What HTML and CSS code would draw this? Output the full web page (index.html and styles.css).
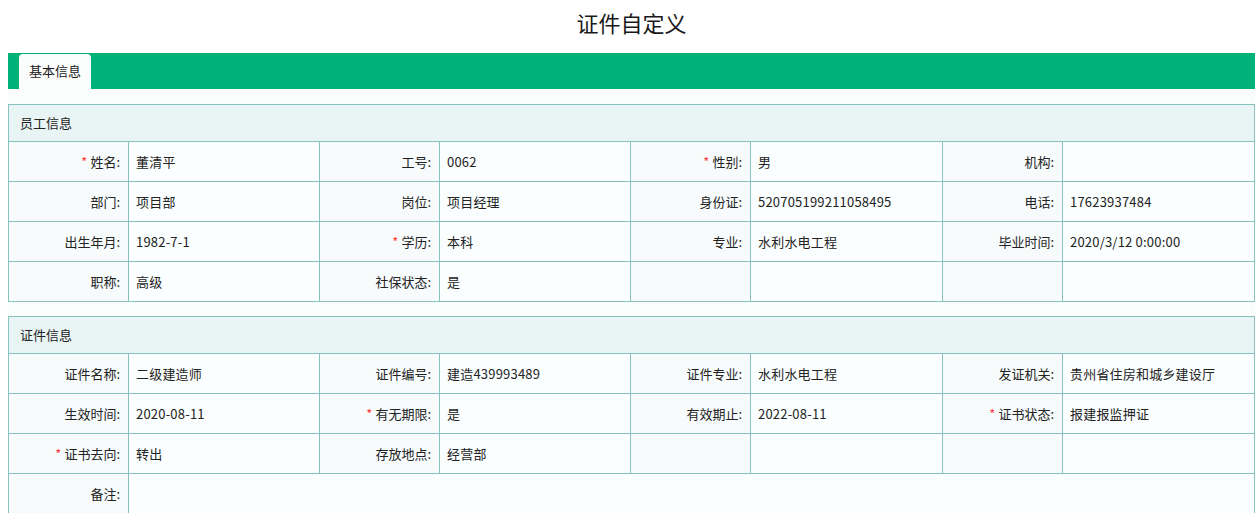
FILE: index.html
```html
<!DOCTYPE html>
<html lang="zh-CN">
<head>
<meta charset="utf-8">
<title>证件自定义</title>
<link rel="stylesheet" href="styles.css">
</head>
<body>
<div class="page">
  <h1 class="title">证件自定义</h1>
  <div class="tabbar">
    <div class="tab">基本信息</div>
  </div>
  <div class="content">
    <table class="info">
      <colgroup>
        <col class="cl"><col class="cv"><col class="cl"><col class="cv"><col class="cl"><col class="cv2"><col class="cl"><col class="cv2">
      </colgroup>
      <tr class="head"><td colspan="8">员工信息</td></tr>
      <tr>
        <td class="lbl"><span class="req">*</span>姓名:</td><td class="val">董清平</td>
        <td class="lbl">工号:</td><td class="val">0062</td>
        <td class="lbl"><span class="req">*</span>性别:</td><td class="val">男</td>
        <td class="lbl">机构:</td><td class="val"></td>
      </tr>
      <tr>
        <td class="lbl">部门:</td><td class="val">项目部</td>
        <td class="lbl">岗位:</td><td class="val">项目经理</td>
        <td class="lbl">身份证:</td><td class="val">520705199211058495</td>
        <td class="lbl">电话:</td><td class="val">17623937484</td>
      </tr>
      <tr>
        <td class="lbl">出生年月:</td><td class="val">1982-7-1</td>
        <td class="lbl"><span class="req">*</span>学历:</td><td class="val">本科</td>
        <td class="lbl">专业:</td><td class="val">水利水电工程</td>
        <td class="lbl">毕业时间:</td><td class="val">2020/3/12 0:00:00</td>
      </tr>
      <tr>
        <td class="lbl">职称:</td><td class="val">高级</td>
        <td class="lbl">社保状态:</td><td class="val">是</td>
        <td class="lbl"></td><td class="val"></td>
        <td class="lbl"></td><td class="val"></td>
      </tr>
    </table>

    <table class="info">
      <colgroup>
        <col class="cl"><col class="cv"><col class="cl"><col class="cv"><col class="cl"><col class="cv2"><col class="cl"><col class="cv2">
      </colgroup>
      <tr class="head"><td colspan="8">证件信息</td></tr>
      <tr>
        <td class="lbl">证件名称:</td><td class="val">二级建造师</td>
        <td class="lbl">证件编号:</td><td class="val">建造439993489</td>
        <td class="lbl">证件专业:</td><td class="val">水利水电工程</td>
        <td class="lbl">发证机关:</td><td class="val">贵州省住房和城乡建设厅</td>
      </tr>
      <tr>
        <td class="lbl">生效时间:</td><td class="val">2020-08-11</td>
        <td class="lbl"><span class="req">*</span>有无期限:</td><td class="val">是</td>
        <td class="lbl">有效期止:</td><td class="val">2022-08-11</td>
        <td class="lbl"><span class="req">*</span>证书状态:</td><td class="val">报建报监押证</td>
      </tr>
      <tr>
        <td class="lbl"><span class="req">*</span>证书去向:</td><td class="val">转出</td>
        <td class="lbl">存放地点:</td><td class="val">经营部</td>
        <td class="lbl"></td><td class="val"></td>
        <td class="lbl"></td><td class="val"></td>
      </tr>
      <tr>
        <td class="lbl">备注:</td><td class="val" colspan="7"></td>
      </tr>
    </table>
  </div>
</div>
</body>
</html>
```

FILE: styles.css
```css
html, body {
  margin: 0;
  padding: 0;
  background: #ffffff;
}

body {
  font-family: "Microsoft YaHei", "Noto Sans CJK SC", "Noto Sans", sans-serif;
  font-size: 13px;
  color: #222222;
}

.page {
  padding: 0 1px 0 8px;
}

.title {
  margin: 0;
  height: 53px;
  line-height: 44px;
  text-align: center;
  font-size: 22px;
  font-weight: normal;
  color: #1a1a1a;
}

.tabbar {
  display: flex;
  height: 36px;
  background: #00b27a;
  padding-left: 11px;
  align-items: flex-end;
}

.tab {
  height: 35px;
  line-height: 33px;
  padding: 0 10px;
  background: #fbfdfd;
  border-radius: 4px 4px 0 0;
  color: #1a1a1a;
}

.content {
  background: #fbfdfd;
  padding-top: 15px;
}

.info {
  width: 1247px;
  border-collapse: collapse;
  table-layout: fixed;
  margin-bottom: 14px;
}

.cl { width: 120px; }
.cv { width: 191px; }
.cv2 { width: 192px; }

.info td {
  border: 1px solid #86c2be;
  height: 39px;
  padding: 0;
  white-space: nowrap;
  overflow: hidden;
}

.info .head td {
  height: 36px;
  background: #e9f4f4;
  padding-left: 11px;
  line-height: 32px;
}

.lbl {
  text-align: right;
  padding-right: 8px !important;
  background: #f7fbfc;
}

.val {
  padding-left: 7px !important;
  background: #fbfefe;
  letter-spacing: 0.2px;
}

.req {
  color: #ff3b3b;
  margin-right: 3px;
  font-size: 13px;
}
```
